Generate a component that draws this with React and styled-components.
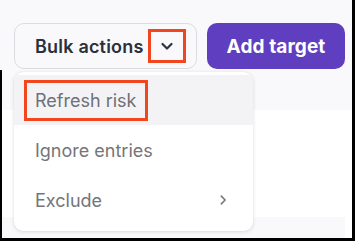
import React from "react";
import styled, { createGlobalStyle } from "styled-components";

const Global = createGlobalStyle`
  html, body { margin: 0; padding: 0; background: #ffffff; }
  body { font-family: Inter, "Noto Sans", sans-serif; }
  * { box-sizing: border-box; }
`;

const Frame = styled.div`
  position: relative;
  width: 355px;
  height: 241px;
  border-right: 3px solid #000;
  border-bottom: 3px solid #000;
  display: flex;
  flex-direction: column;
  background: #fff;
  overflow: hidden;
`;

const Toolbar = styled.div`
  height: 70px;
  background: #f9f9fb;
  display: flex;
  align-items: flex-start;
  padding: 23px 0 0 14px;
  gap: 10px;
`;

const Table = styled.div`
  flex: 1;
  display: flex;
  flex-direction: column;
  border-left: 2px solid #000;
`;

const Band = styled.div`
  height: ${(p) => p.$h}px;
  background: ${(p) => p.$bg};
  margin-right: ${(p) => p.$mr || 0}px;
`;

const Spacer = styled.div`
  flex: 1;
  background: #fff;
`;

const BulkButton = styled.div`
  width: 183px;
  height: 46px;
  border: 1px solid #dcdce0;
  border-radius: 10px;
  background: #f9f9fb;
  display: flex;
  align-items: center;
  padding-left: 20px;
  gap: 4px;
  font-size: 18px;
  font-weight: 600;
  letter-spacing: 0.2px;
  color: #2a303c;
`;

const ChevronBox = styled.span`
  width: 38px;
  height: 34px;
  border: 3px solid #f2461f;
  display: flex;
  align-items: center;
  justify-content: center;
`;

const AddButton = styled.div`
  width: 138px;
  height: 46px;
  border-radius: 10px;
  background: #5f3fc0;
  color: #fff;
  font-size: 19px;
  font-weight: 700;
  letter-spacing: 0.1px;
  display: flex;
  align-items: center;
  justify-content: center;
`;

const Menu = styled.div`
  position: absolute;
  left: 14px;
  top: 72px;
  width: 239px;
  height: 159px;
  background: #fff;
  border-radius: 9px;
  box-shadow: 0 1px 4px rgba(0, 0, 0, 0.12), 0 0 1px rgba(0, 0, 0, 0.1);
  padding-top: 3px;
  display: flex;
  flex-direction: column;
`;

const Item = styled.div`
  height: 50px;
  flex-shrink: 0;
  display: flex;
  align-items: center;
  justify-content: space-between;
  padding: 0 24px 0 21px;
  font-size: 18px;
  color: #75757a;
  background: ${(p) => (p.$active ? "#f3f3f5" : "transparent")};
`;

const Highlight = styled.span`
  border: 3px solid #f2461f;
  padding: 7px 9px 7px 8px;
  margin-left: -11px;
  color: #707075;
`;

const Chevron = ({ dir = "down", size = 14, color = "#2d3340", w = 2.2 }) => (
  <svg width={size} height={size} viewBox="0 0 14 14" fill="none">
    {dir === "down" ? (
      <path d="M2.5 5l4.5 4.5L11.5 5" stroke={color} strokeWidth={w} strokeLinecap="round" strokeLinejoin="round" />
    ) : (
      <path d="M5 2.5l4.5 4.5L5 11.5" stroke={color} strokeWidth={w} strokeLinecap="round" strokeLinejoin="round" />
    )}
  </svg>
);

export default function App() {
  return (
    <>
      <Global />
      <Frame>
        <Toolbar>
          <BulkButton>
            Bulk actions
            <ChevronBox>
              <Chevron dir="down" size={14} />
            </ChevronBox>
          </BulkButton>
          <AddButton>Add target</AddButton>
        </Toolbar>
        <Table>
          <Band $h={40} $bg="#f9f9fb" />
          <Spacer />
          <Band $h={21} $bg="#f9f9fb" $mr={7} />
        </Table>
        <Menu>
          <Item $active>
            <Highlight>Refresh risk</Highlight>
          </Item>
          <Item>Ignore entries</Item>
          <Item>
            Exclude
            <Chevron dir="right" size={12} color="#75757a" w={1.8} />
          </Item>
        </Menu>
      </Frame>
    </>
  );
}
